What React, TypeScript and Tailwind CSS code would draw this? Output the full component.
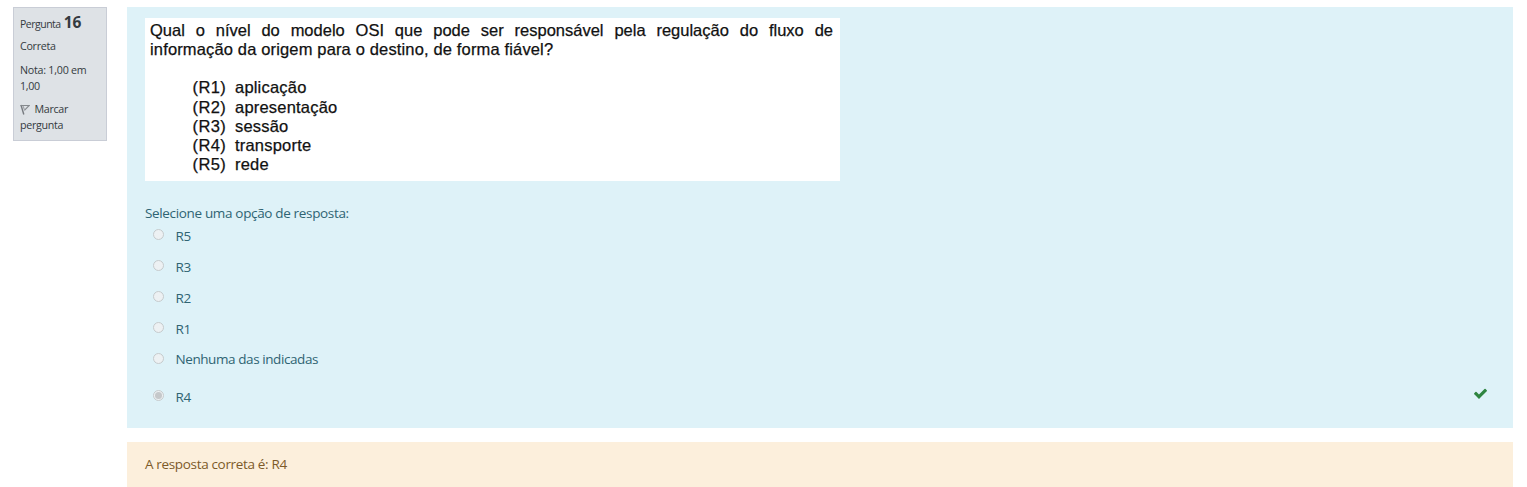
const levels = [
  ["(R1)", "aplicação"],
  ["(R2)", "apresentação"],
  ["(R3)", "sessão"],
  ["(R4)", "transporte"],
  ["(R5)", "rede"],
];

function Radio({ checked = false }: { checked?: boolean }) {
  return (
    <span
      role="radio"
      aria-checked={checked}
      className="mt-[7px] mr-[11.5px] flex size-[11px] shrink-0 items-center justify-center rounded-full border border-[#c6cbcd] bg-[#edf1f3]"
    >
      {checked && <span className="size-[7px] rounded-full bg-[#c5c8ca]" />}
    </span>
  );
}

function Option({ label, checked = false, labelClass = "pt-[4px]" }: { label: string; checked?: boolean; labelClass?: string }) {
  return (
    <div className="flex h-[31px] items-start pl-[8px]">
      <Radio checked={checked} />
      <span className={`leading-[20px] ${labelClass}`}>{label}</span>
    </div>
  );
}

function FlagIcon() {
  return (
    <svg width="10" height="11" viewBox="0 0 10 11" className="mr-[4.5px] inline-block align-[-2px]" fill="none">
      <path d="M1 1 3.8 10.5" stroke="#777b80" strokeWidth="1.4" />
      <path d="M.5 1.5H9.2L4.4 6.4" stroke="#85898d" strokeWidth="1.1" />
      <path d="M3 2 4.6 6" stroke="#a0a3a7" strokeWidth="1.1" />
    </svg>
  );
}

function CheckIcon() {
  return (
    <svg width="15" height="15" viewBox="0 0 1792 1792" className="mt-[2.5px]" fill="#2e8540">
      <path d="M1671 566q0 40-28 68l-724 724-136 136q-28 28-68 28t-68-28l-136-136-362-362q-28-28-28-68t28-68l136-136q28-28 68-28t68 28l294 295 656-657q28-28 68-28t68 28l136 136q28 28 28 68z" />
    </svg>
  );
}

export default function App() {
  return (
    <div className="flex h-[487px] w-[1527px] items-start overflow-hidden bg-white pt-[7px] pl-[13px] font-['Open_Sans','Noto_Sans',sans-serif]">
      <aside className="h-[134px] w-[94px] shrink-0 border border-[#c9cdd6] bg-[#dee2e6] pl-[6px] text-[10.7px] leading-[16px] tracking-[-0.3px] text-[#343a40]">
        <h3 className="mt-[6px] h-[16px] whitespace-nowrap">
          <span className="text-[10.5px] tracking-[-0.5px]">Pergunta</span>{" "}
          <span className="ml-[0.5px] text-[15.5px] font-bold tracking-[0px]">16</span>
        </h3>
        <div className="mt-[8px]">Correta</div>
        <div className="mt-[8px]">
          <span className="tracking-[-0.24px]">Nota: 1,00 em</span>
          <br />
          1,00
        </div>
        <div className="mt-[7px]">
          <FlagIcon />
          Marcar
          <br />
          pergunta
        </div>
      </aside>

      <main className="ml-[20px] w-[1386px] text-[13.5px] tracking-[-0.34px]">
        <section className="h-[421px] bg-[#def2f8] pt-[11px] pl-[18px] text-[#2f6473]">
          <div className="h-[163px] w-[695px] bg-white pt-[3px] pr-[7px] pl-[5px] font-['Liberation_Sans',Arial,sans-serif] text-[16.5px] leading-[19.3px] tracking-[0px] text-[#111]">
            <p className="h-[19.3px] whitespace-nowrap [text-align-last:justify] [-webkit-text-stroke:0.25px_#111]">
              Qual o nível do modelo OSI que pode ser responsável pela regulação do fluxo de
            </p>
            <p className="whitespace-nowrap tracking-[0.15px] [-webkit-text-stroke:0.25px_#111]">
              informação da origem para o destino, de forma fiável?
            </p>
            <div className="mt-[18.7px] pl-[42.5px] tracking-[0.2px] [-webkit-text-stroke:0.25px_#111]">
              {levels.map(([code, name]) => (
                <div key={code} className="flex">
                  <span className="w-[42.5px] tracking-[0.4px]">{code}</span>
                  <span>{name}</span>
                </div>
              ))}
            </div>
          </div>

          <div className="mt-[22px] h-[19px] leading-[20px]">
            <span>Selecione uma opção de resposta:</span>
          </div>
          <div>
            <Option label="R5" />
            <Option label="R3" />
            <Option label="R2" />
            <Option label="R1" />
            <Option label="Nenhuma das indicadas" labelClass="pt-[3px] tracking-[-0.42px]" />
            <div className="mt-[6px] flex justify-between pr-[25px]">
              <Option label="R4" checked />
              <CheckIcon />
            </div>
          </div>
        </section>

        <section className="mt-[14px] h-[45px] bg-[#fcefdc] pt-[12px] pl-[18px] leading-[20px] text-[#7d5a29]">
          <span>A resposta correta é: R4</span>
        </section>
      </main>
    </div>
  );
}
